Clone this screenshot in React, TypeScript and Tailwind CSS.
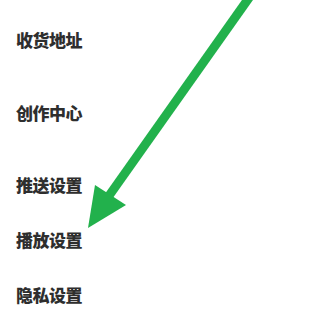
const items = ["收货地址", "创作中心", "推送设置", "播放设置", "隐私设置"];

export default function App() {
  return (
    <div className="relative w-[325px] h-[312px] overflow-hidden bg-white">
      <div className="flex flex-col pt-[12.5px] pl-[16px]">
        {items.map((label, i) => (
          <div
            key={label}
            className={`h-[55px] flex items-center text-[17px] font-extrabold text-[#2e2e2e] tracking-[-0.5px] ${i < 2 ? "mb-[17.5px]" : ""}`}
            style={{ fontFamily: '"Noto Sans CJK SC", "Noto Sans", sans-serif' }}
          >
            {label}
          </div>
        ))}
      </div>

      <svg
        className="absolute inset-0 pointer-events-none"
        width="325"
        height="312"
        viewBox="0 0 325 312"
      >
        <line x1="251" y1="-5" x2="106" y2="200" stroke="#22b14c" strokeWidth="9" />
        <polygon points="95,185 126,205 88,228" fill="#22b14c" />
      </svg>
    </div>
  );
}
